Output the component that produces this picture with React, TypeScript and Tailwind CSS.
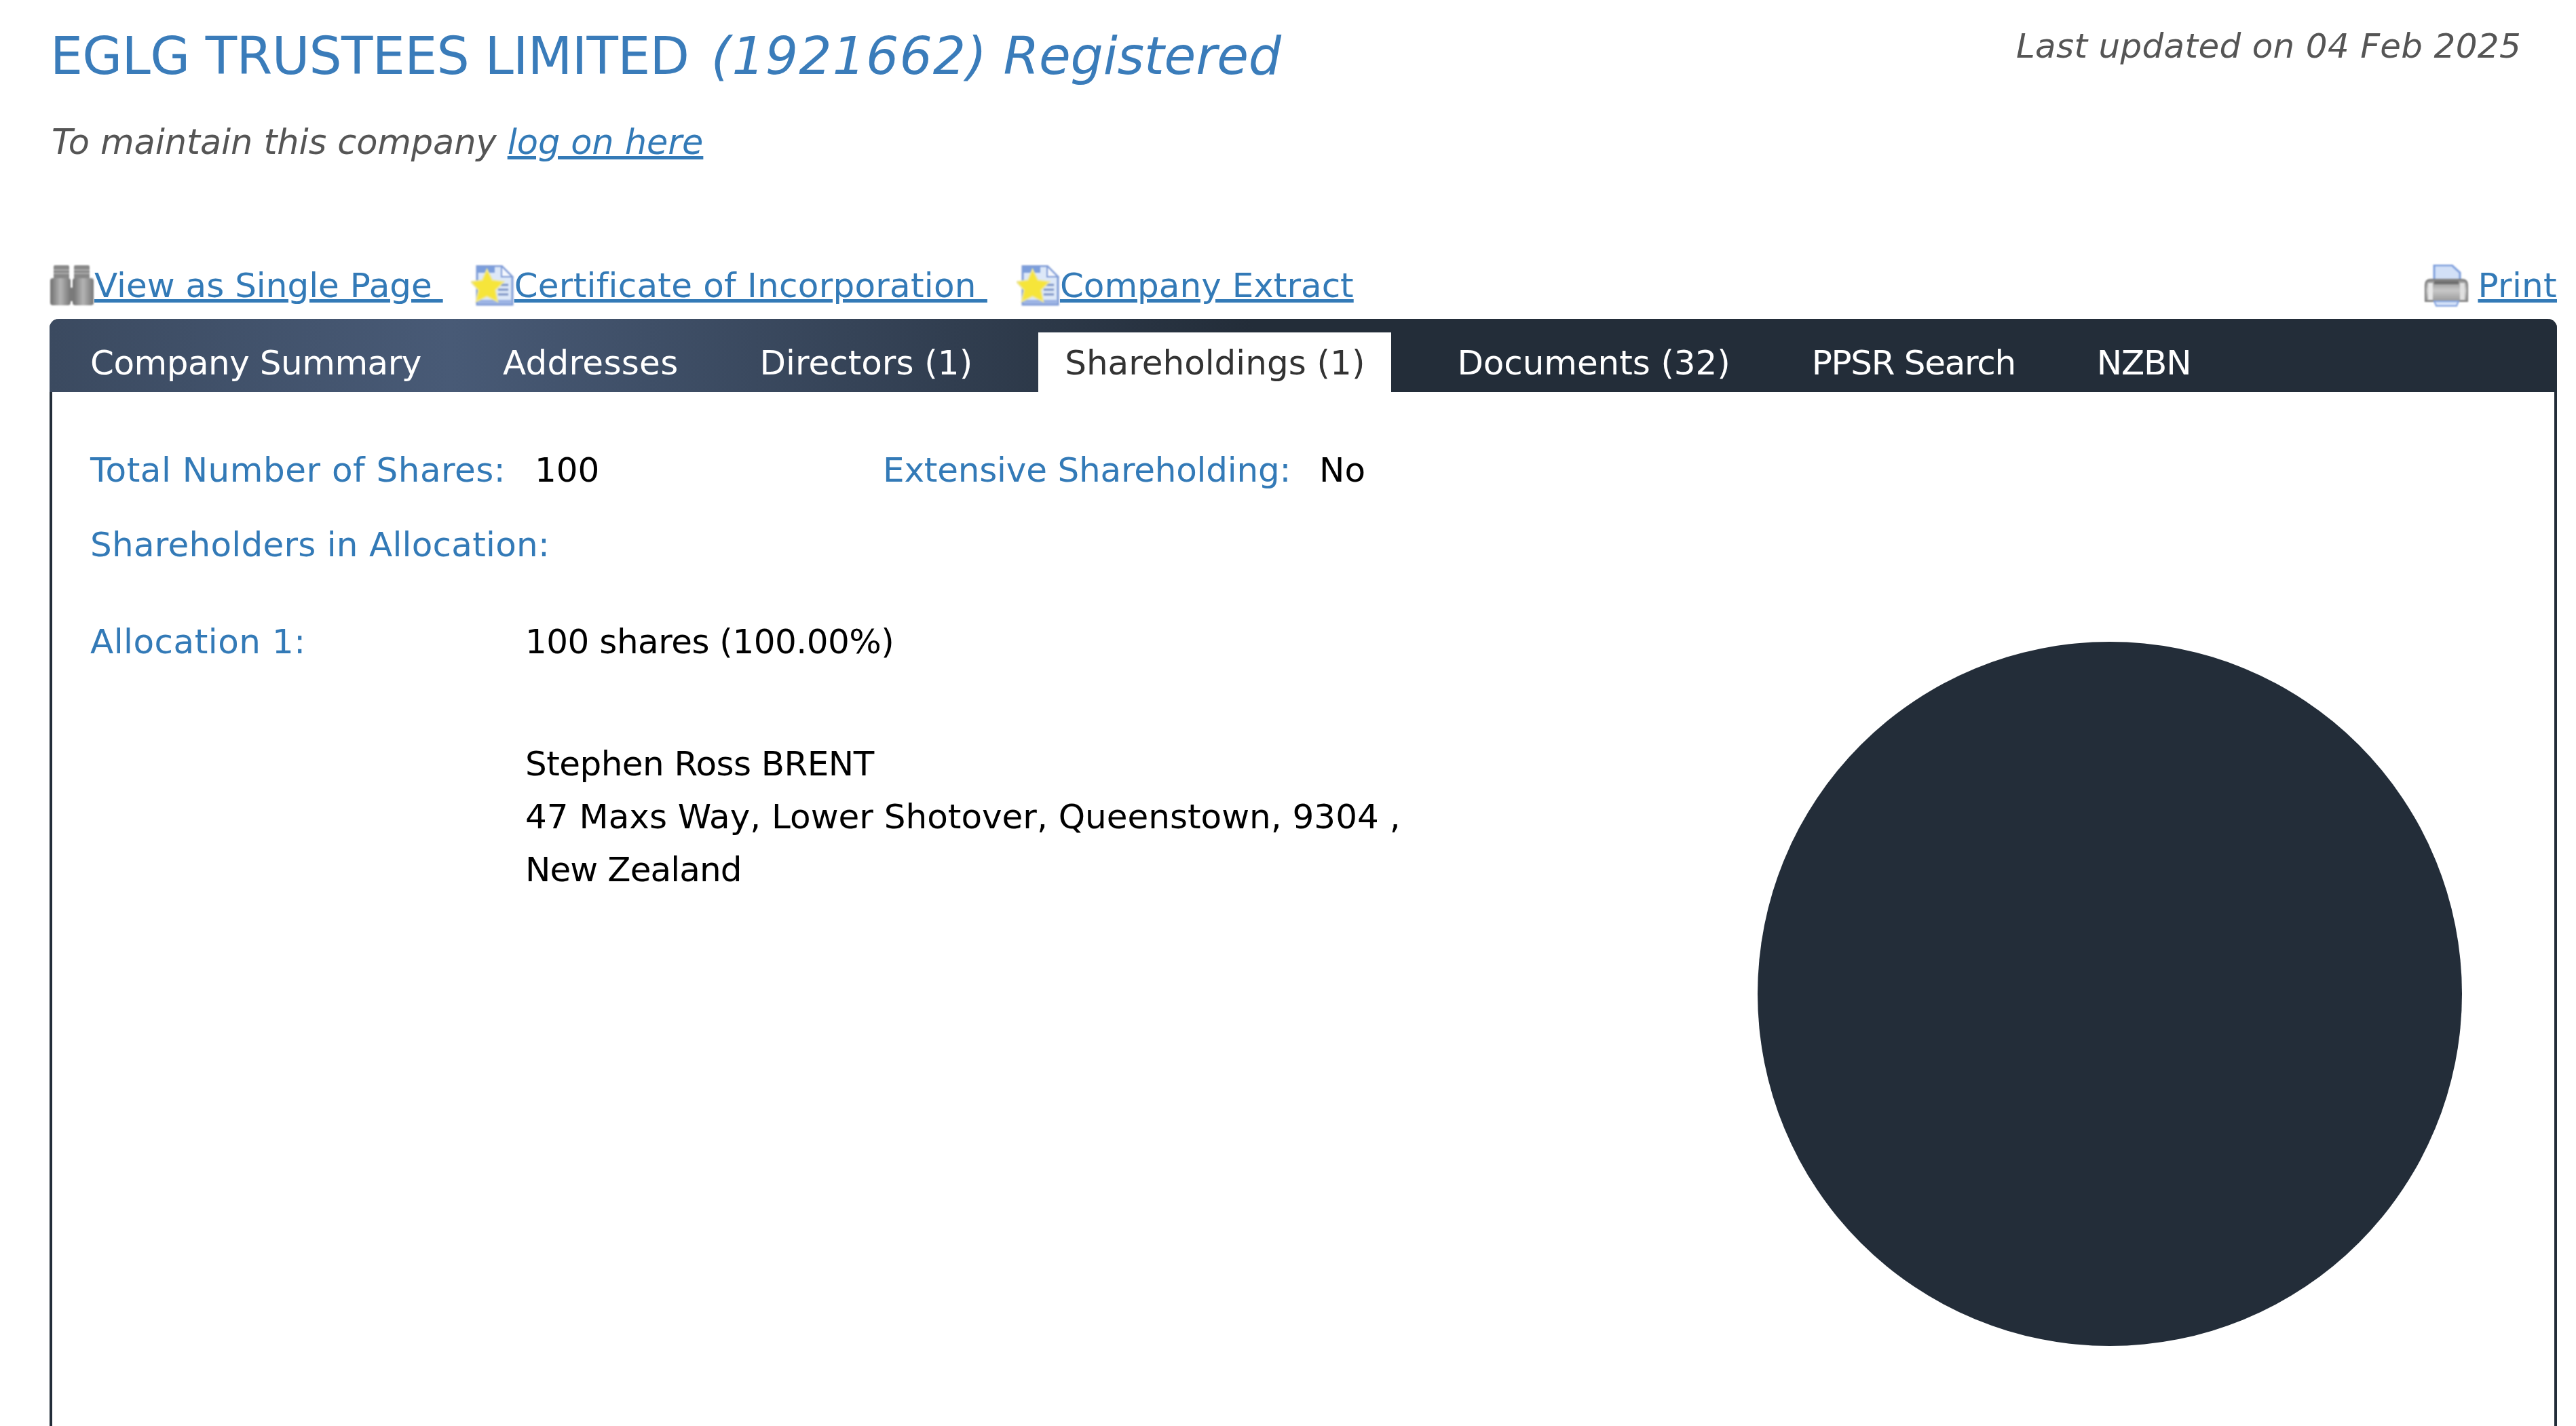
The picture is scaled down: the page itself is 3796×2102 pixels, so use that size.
import React from 'react';

const BinocularsIcon = () => (
  <svg width="66" height="62" viewBox="0 0 66 62" className="shrink-0 blur-[1.2px]">
    <defs>
      <linearGradient id="barrel" x1="0" x2="1" y1="0" y2="0">
        <stop offset="0" stopColor="#6f6f6f" />
        <stop offset="0.5" stopColor="#b4b4b4" />
        <stop offset="1" stopColor="#777" />
      </linearGradient>
    </defs>
    <rect x="6" y="1" width="23" height="20" rx="2" fill="#888" />
    <rect x="36" y="1" width="23" height="20" rx="2" fill="#888" />
    <path d="M6 8h23M6 13h23M36 8h23M36 13h23" stroke="#adadad" strokeWidth="2" />
    <rect x="1" y="20" width="30" height="40" rx="4" fill="url(#barrel)" />
    <rect x="34" y="20" width="31" height="40" rx="4" fill="url(#barrel)" />
    <rect x="29" y="34" width="7" height="20" fill="#7a7a7a" />
  </svg>
);

const CertificateIcon = () => (
  <svg width="64" height="60" viewBox="0 0 64 60" className="shrink-0 blur-[0.8px]">
    <path d="M9 1h36l16 16v41H9z" fill="#dde8f8" stroke="#7f9bd6" strokeWidth="3" />
    <path d="M45 1v16h16z" fill="#f4f7fd" stroke="#7f9bd6" strokeWidth="2" />
    <rect x="9" y="2" width="26" height="9" fill="#7c9edc" />
    <path d="M40 29h15M40 36h15M40 43h15" stroke="#7d93c4" strokeWidth="3" />
    <rect x="11" y="51" width="48" height="6" fill="#9db4e4" />
    <g transform="translate(0 3) scale(1.12)">
      <path d="M21 3l7 14 15 2-11 11 3 15-14-7-14 7 3-15L0 19l15-2z" fill="#f6e53a" stroke="#eee69a" strokeWidth="2" />
    </g>
  </svg>
);

const PrinterIcon = () => (
  <svg width="68" height="62" viewBox="0 0 68 62" className="shrink-0 blur-[0.8px]">
    <defs>
      <linearGradient id="printer-body" x1="0" x2="0" y1="0" y2="1">
        <stop offset="0" stopColor="#8d8d8d" />
        <stop offset="0.5" stopColor="#c8c8c8" />
        <stop offset="1" stopColor="#9a9a9a" />
      </linearGradient>
    </defs>
    <path d="M16 1h26l12 11v16H16z" fill="#d2e0f7" stroke="#7f9fdc" strokeWidth="3" />
    <path d="M3 30q0-8 8-8h46q8 0 8 8v24H3z" fill="url(#printer-body)" stroke="#7b7b7b" strokeWidth="2" />
    <rect x="7" y="27" width="7" height="25" fill="#e8e8e8" />
    <rect x="54" y="27" width="7" height="25" fill="#e0e0e0" />
    <rect x="16" y="24" width="36" height="5" fill="#6f6f6f" />
    <path d="M16 54h36l-3 7H19z" fill="#d2e0f7" stroke="#7f9fdc" strokeWidth="2" />
  </svg>
);

const tabs = [
  { label: 'Company Summary', cls: 'tracking-[-0.5px]' },
  { label: 'Addresses', cls: 'tracking-[0.3px]' },
  { label: 'Directors (1)', cls: '' },
  { label: 'Shareholdings (1)', active: true, cls: '' },
  { label: 'Documents (32)', cls: 'tracking-[-0.1px]' },
  { label: 'PPSR Search', cls: 'tracking-[-1.3px]' },
  { label: 'NZBN', cls: 'tracking-[-1.2px]' },
];

export default function App() {
  return (
    <div className="h-[2102px] overflow-hidden bg-white pl-[73px] pr-[28px] font-['DejaVu_Sans',sans-serif] text-[50px] leading-[78px] text-black">
      {/* Header */}
      <div className="flex h-[390px] justify-between">
        <div>
          <h1 className="pl-[1px] pt-[27px] text-[76px] leading-[112px] tracking-[-0.7px] text-[#3a7cba]">
            EGLG TRUSTEES LIMITED{' '}
            <em className="ml-[9px] tracking-[1.05px]">(1921662)</em>{' '}
            <em className="tracking-[-0.2px]">Registered</em>
          </h1>
          <p className="mt-[32px] pl-[3px] text-[51px] italic tracking-[-0.1px] text-[#555]">
            To maintain this company{' '}
            <a className="text-[#337ab7] underline">log on here</a>
          </p>
        </div>
        <p className="mr-[53px] pt-[29px] text-[50px] italic leading-[78px] tracking-[0.3px] text-[#555]">
          Last updated on 04 Feb 2025
        </p>
      </div>

      {/* Link row */}
      <div className="flex h-[80px] items-center justify-between pb-[18px] text-[#337ab7]">
        <div className="flex items-center">
          <BinocularsIcon />
          <a className="whitespace-pre underline">View as Single Page </a>
          <span className="ml-[41px]"><CertificateIcon /></span>
          <a className="whitespace-pre tracking-[0.25px] underline">Certificate of Incorporation </a>
          <span className="ml-[43px]"><CertificateIcon /></span>
          <a className="whitespace-pre underline">Company Extract</a>
        </div>
        <div className="flex items-center gap-[12px]">
          <PrinterIcon />
          <a className="tracking-[0.3px] underline">Print</a>
        </div>
      </div>

      {/* Panel */}
      <div className="h-[1700px] rounded-t-[14px] border-x-[4px] border-[#232d39]">
        <ul className="-mx-[4px] flex h-[108px] items-end gap-[40px] rounded-t-[14px] bg-[linear-gradient(90deg,#3b4a60_0%,#485a76_16%,#232d39_48%)] pl-[20px]">
          {tabs.map((tab) => (
            <li
              key={tab.label}
              className={
                tab.active
                  ? 'mx-[17px] bg-white px-[39px] pt-[2px] leading-[86px] text-[#333]'
                  : `px-[40px] pt-[2px] leading-[86px] text-white ${tab.cls}`
              }
            >
              {tab.label}
            </li>
          ))}
        </ul>

        <div className="flex justify-between pl-[56px] pr-[135px]">
          <div className="pt-[76px]">
            <div className="flex">
              <span className="w-[655px] tracking-[0.5px] text-[#337ab7]">Total Number of Shares:</span>
              <span className="w-[513px]">100</span>
              <span className="w-[643px] tracking-[-0.2px] text-[#337ab7]">Extensive Shareholding:</span>
              <span>No</span>
            </div>
            <div className="mt-[32px] tracking-[0.25px] text-[#337ab7]">Shareholders in Allocation:</div>
            <div className="mt-[65px] flex">
              <span className="w-[641px] tracking-[0.5px] text-[#337ab7]">Allocation 1:</span>
              <div>
                <div className="tracking-[-0.5px]">100 shares (100.00%)</div>
                <div className="mt-[102px] tracking-[-0.55px]">Stephen Ross BRENT</div>
                <div>47 Maxs Way, Lower Shotover, Queenstown, 9304 ,</div>
                <div className="tracking-[-0.9px]">New Zealand</div>
              </div>
            </div>
          </div>
          <svg width="1040" height="1040" viewBox="0 0 1040 1040" className="mt-[367px] shrink-0">
            <circle cx="520" cy="520" r="519" fill="#232d39" />
          </svg>
        </div>
      </div>
    </div>
  );
}
